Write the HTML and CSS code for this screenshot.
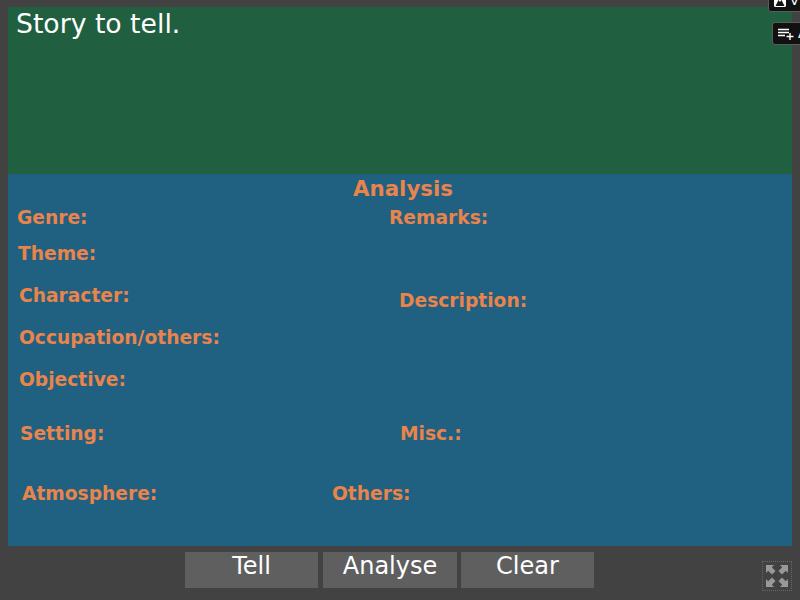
FILE: index.html
```html
<!DOCTYPE html>
<html lang="en">
<head>
  <meta charset="UTF-8" />
  <title>Story to tell</title>
  <link rel="stylesheet" href="styles.css">
</head>
<body>
<div class="stage">
  <div class="story">Story to tell.</div>

  <div class="analysis">
    <div class="analysis-title">Analysis</div>
    <div class="row row-genre">
      <span class="label genre">Genre:</span>
      <span class="label remarks">Remarks:</span>
    </div>
    <div class="row row-theme"><span class="label theme">Theme:</span></div>
    <div class="row row-character">
      <span class="label character">Character:</span>
      <span class="label description">Description:</span>
    </div>
    <div class="row row-occupation"><span class="label character">Occupation/others:</span></div>
    <div class="row row-objective"><span class="label character">Objective:</span></div>
    <div class="row row-setting">
      <span class="label setting">Setting:</span>
      <span class="label misc">Misc.:</span>
    </div>
    <div class="row row-atmosphere">
      <span class="label atmosphere">Atmosphere:</span>
      <span class="label others">Others:</span>
    </div>
  </div>

  <div class="buttons">
    <button class="btn btn-tell">Tell</button>
    <button class="btn btn-analyse">Analyse</button>
    <button class="btn btn-clear">Clear</button>
  </div>

  <div class="tool tool-view">
    <svg width="14" height="14" viewBox="0 0 14 14"><rect x="1" y="1" width="12" height="12" rx="1.500" fill="#fff"/><path d="M2.500 12l3-6 1.500 2 1.500-2 3 6z" fill="#111"/><circle cx="7" cy="4" r="1.800" fill="#111"/></svg>
    <span>V</span>
  </div>
  <div class="tool tool-add">
    <svg width="18" height="14" viewBox="0 0 18 14"><path d="M1 2.500h11M1 5.500h11M1 8.500h7M9.500 9.500h7M13 6v7" stroke="#fff" stroke-width="1.400" fill="none"/></svg>
    <span>A</span>
  </div>

  <div class="fullscreen">
    <svg width="22" height="22" viewBox="0 0 22 22"><path d="M0 0h8L5.800 2.200 9.500 6 6 9.500 2.200 5.800 0 8zM22 0v8l-2.200-2.200L16 9.500 12.500 6l3.700-3.800L14 0zM0 22v-8l2.200 2.200L6 12.500 9.500 16l-3.700 3.800L8 22zM22 22h-8l2.200-2.200L12.500 16l3.500-3.500 3.800 3.700L22 14z" fill="#999"/></svg>
  </div>
</div>
</body>
</html>
```

FILE: styles.css
```css
html,body{margin:0;height:100%;overflow:hidden}
body{background:#424242;font-family:"DejaVu Sans",sans-serif}
.stage{position:relative;width:800px;height:600px;padding:7px 8px 0;box-sizing:border-box;overflow:hidden}

.story{height:167px;background:#206040;color:#fff;font-size:26.67px;padding:2px 8px;box-sizing:border-box;line-height:30px}

.analysis{height:372px;background:#206080;padding-top:3px;box-sizing:border-box;color:#e8844c}
.analysis-title{text-align:center;font-size:21.33px;font-weight:bold;line-height:24px;margin-bottom:1px;padding-left:6px}
.row{display:flex;height:22px}
.label{font-size:18.67px;font-weight:bold;line-height:22px;white-space:nowrap}
.row-genre{margin-top:6px}
.row-theme{margin-top:14px}
.row-character{margin-top:20px}
.row-occupation{margin-top:20px}
.row-objective{margin-top:20px}
.row-setting{margin-top:32px}
.row-atmosphere{margin-top:38px}
.genre{margin-left:9px;width:372px}
.theme{margin-left:10px}
.character{margin-left:11px;width:380px}
.description{margin-top:5px}
.setting{margin-left:12px;width:380px}
.atmosphere{margin-left:14px;width:310px}

.buttons{display:flex;gap:5px;margin-top:6px;padding-left:177px}
.btn{width:133px;height:36px;background:#5f5f5f;color:#fff;border:0;padding:0 0 8px;font-family:inherit;font-size:24px;line-height:28px}
.btn-analyse{width:134px}
.btn-clear{margin-left:-1px}

.tool{position:absolute;display:flex;align-items:center;gap:3px;background:#111;border:1px solid #5b5b5b;border-radius:3px;color:#fff;font-size:13px;height:23px;box-sizing:border-box;padding:0 4px}
.tool-view{left:768px;top:-11px;width:60px}
.tool-add{left:772px;top:22px;width:60px}
.fullscreen{position:absolute;left:762px;top:561px;width:30px;height:30px;box-sizing:border-box;border:1px dotted #666;display:flex;align-items:center;justify-content:center}
```
